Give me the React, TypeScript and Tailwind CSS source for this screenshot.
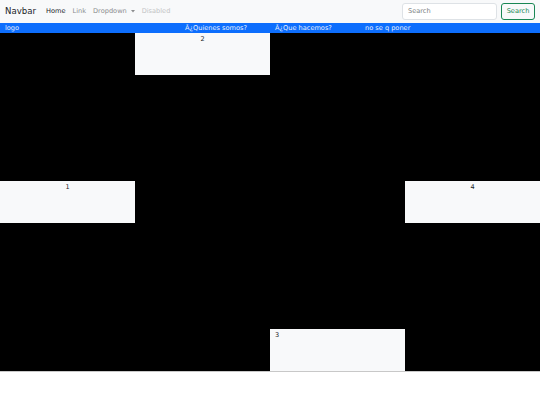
const font = { fontFamily: '"DejaVu Sans", "Liberation Sans", sans-serif' };

function Cell({ label, show, align = "center", tall = true }: { label?: string; show?: boolean; align?: "center" | "left"; tall?: boolean }) {
  return (
    <div className={`bg-black ${tall ? "h-[148px]" : "h-[42px]"}`}>
      {show && (
        <div
          className={`h-[42px] bg-[#f8f9fa] text-[6.5px] leading-[10px] text-[#212529] pt-[1px] ${
            align === "center" ? "text-center" : "pl-[5px]"
          }`}
        >
          {label}
        </div>
      )}
    </div>
  );
}

export default function App() {
  return (
    <div className="w-[540px] h-[405px] bg-white" style={font}>
      {/* Navbar */}
      <nav className="h-[23px] bg-[#f8f9fa] flex items-center px-[5px]">
        <span className="text-[8.6px] text-[#212529] mr-[10px]">Navbar</span>
        <div className="flex items-center gap-[7px] text-[6.6px]">
          <span className="text-[#212529]">Home</span>
          <span className="text-[#8c8d8f]">Link</span>
          <span className="text-[#8c8d8f] flex items-center gap-[2px]">
            Dropdown
            <svg width="4" height="3" viewBox="0 0 4 3" className="ml-[2px]">
              <path d="M0 0 L4 0 L2 2.5 Z" fill="#8c8d8f" />
            </svg>
          </span>
          <span className="text-[#c3c4c5]">Disabled</span>
        </div>
        <div className="ml-auto flex items-center gap-[4px]">
          <div className="w-[95px] h-[17px] bg-white border border-[#dee2e6] rounded-[3px] text-[6.6px] text-[#7b7f83] flex items-center px-[5px]">
            Search
          </div>
          <div className="w-[34px] h-[17px] border border-[#198754] rounded-[3px] text-[6.6px] text-[#198754] flex items-center justify-center">
            Search
          </div>
        </div>
      </nav>

      {/* Blue bar */}
      <div className="h-[10px] bg-[#0d6efd] grid grid-cols-6 text-[6.6px] leading-[10px] text-[#e8f0ff]">
        <div className="pl-[5px]">logo</div>
        <div />
        <div className="pl-[5px]">Â¿Quienes somos?</div>
        <div className="pl-[5px]">Â¿Que hacemos?</div>
        <div className="pl-[5px]">no se q poner</div>
        <div />
      </div>

      {/* Grid */}
      <div className="grid grid-cols-4 border-b border-[#c8c8c8]">
        <Cell />
        <Cell show label="2" />
        <Cell />
        <Cell />
        <Cell show label="1" />
        <Cell />
        <Cell />
        <Cell show label="4" />
        <Cell tall={false} />
        <Cell tall={false} />
        <Cell tall={false} show label="3" align="left" />
        <Cell tall={false} />
      </div>
    </div>
  );
}
